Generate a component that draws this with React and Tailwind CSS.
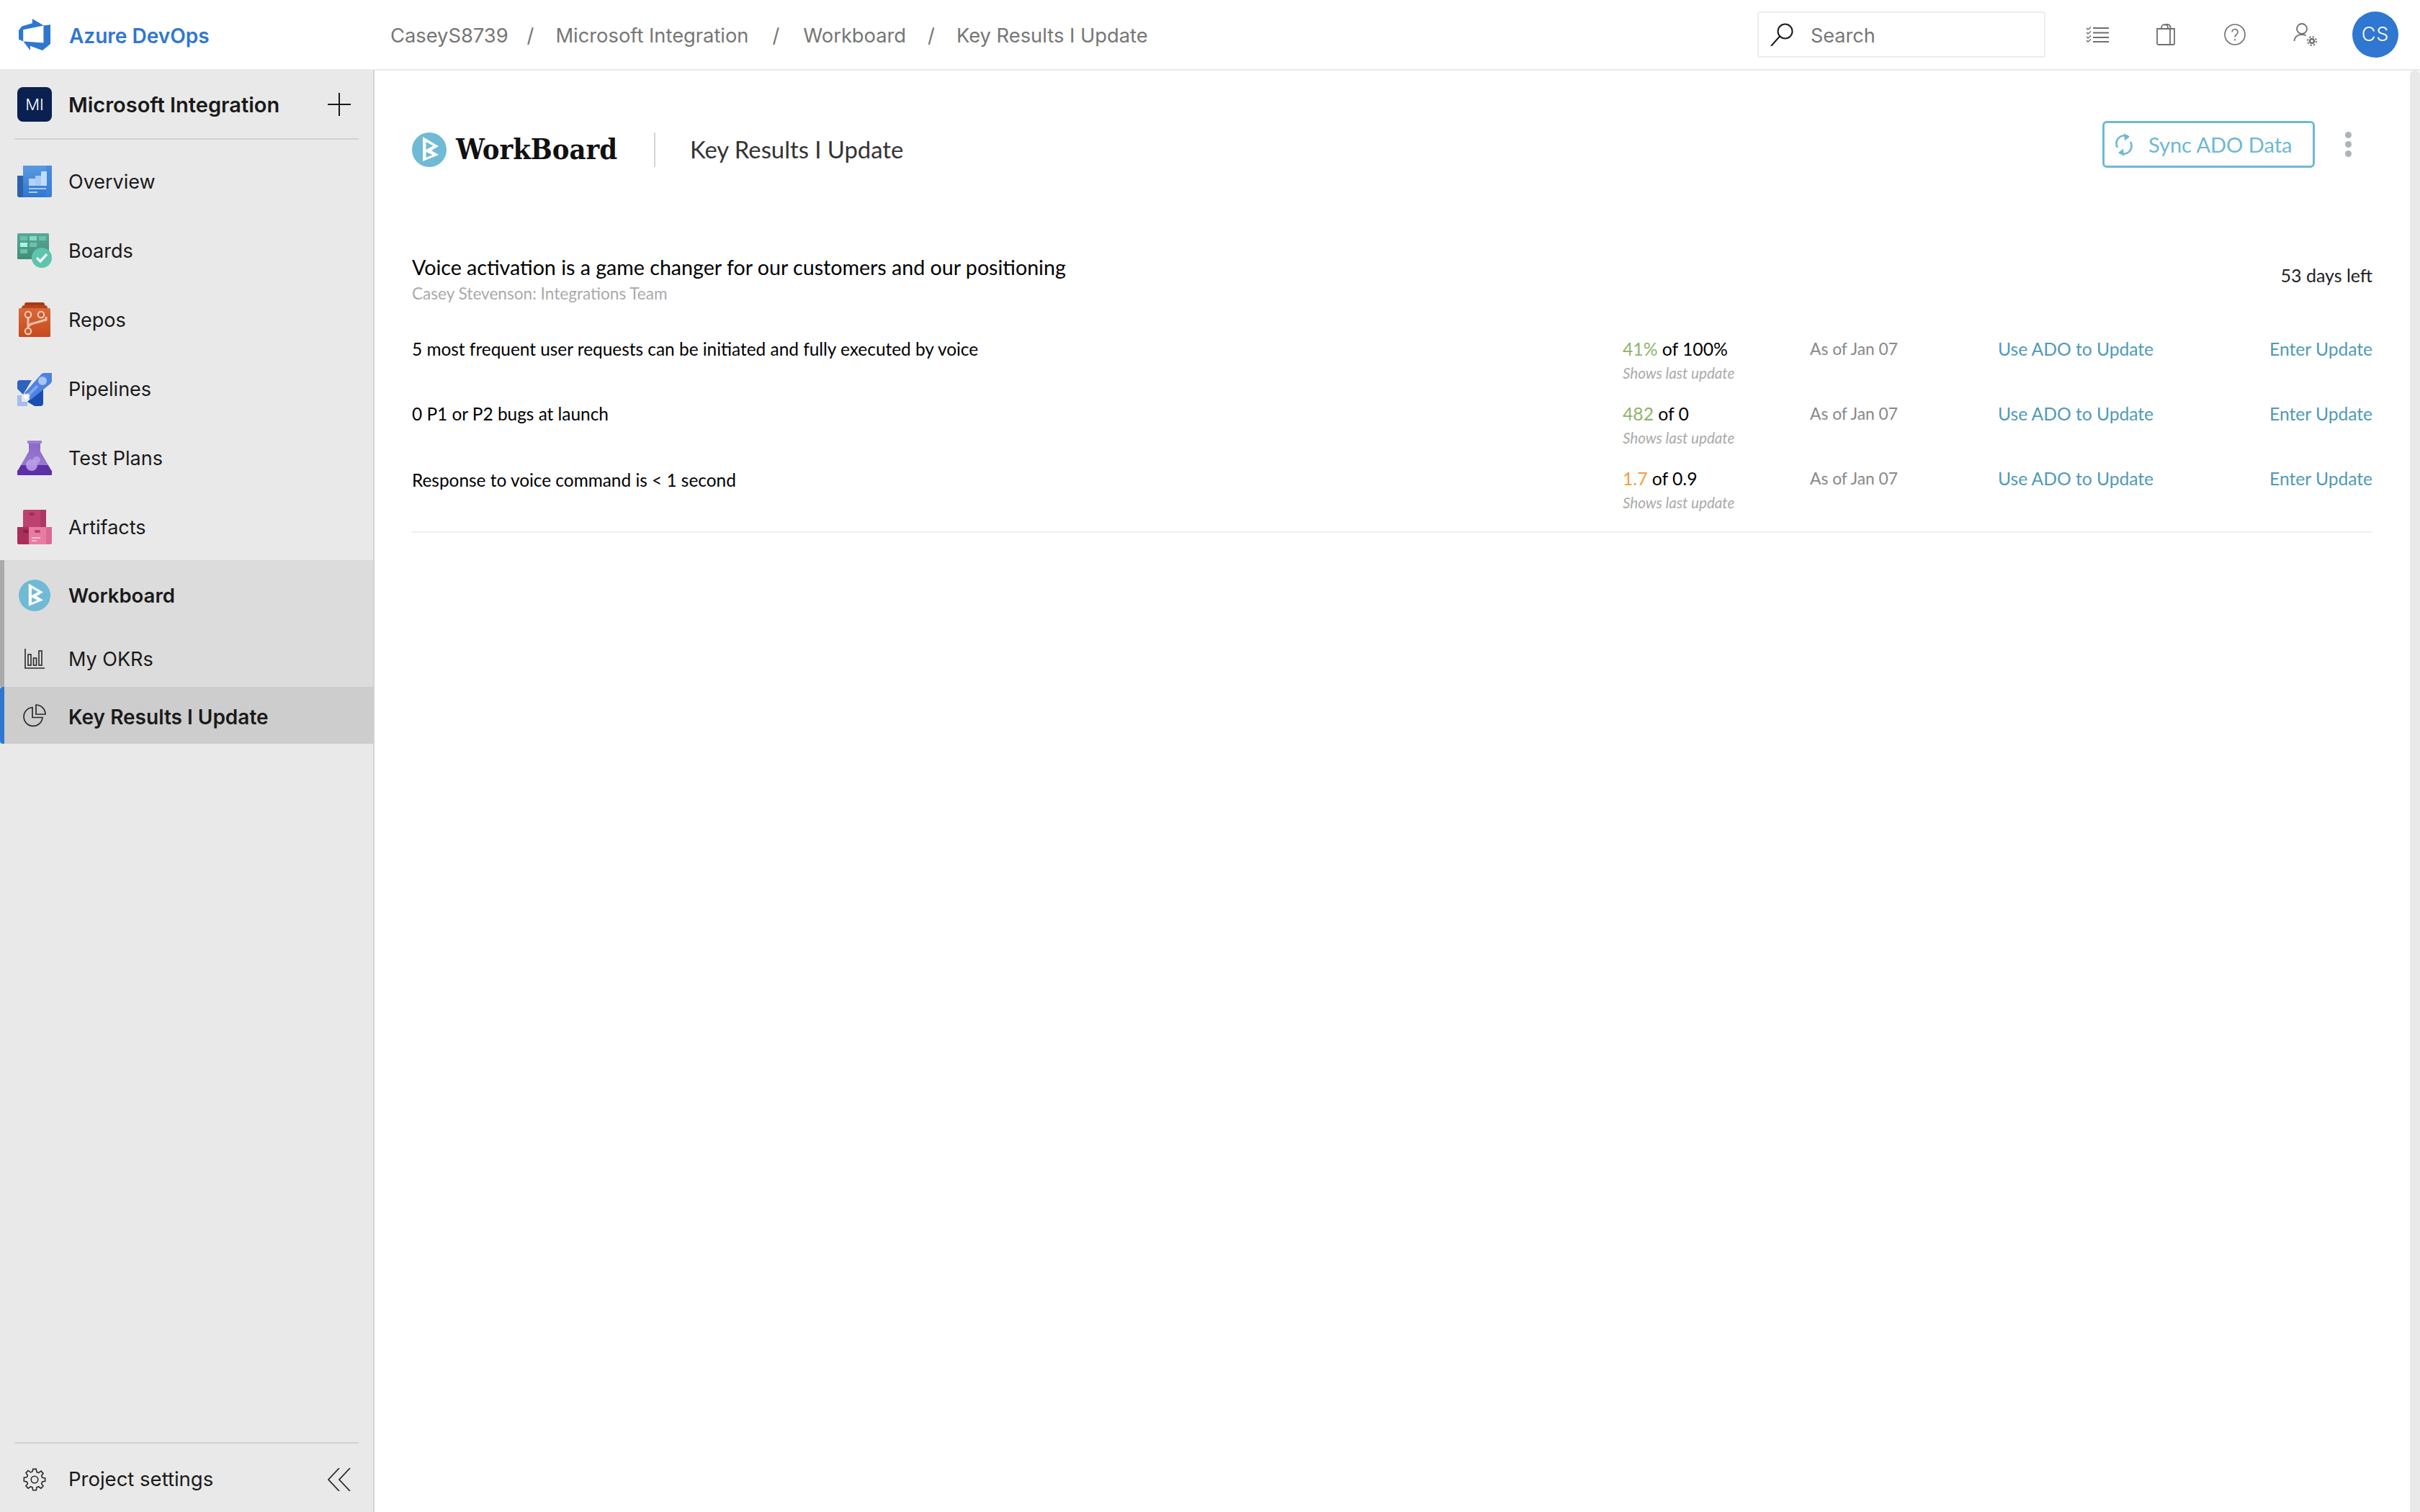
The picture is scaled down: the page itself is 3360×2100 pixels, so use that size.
import React from 'react';

const krs = [
    { title: '5 most frequent user requests can be initiated and fully executed by voice', value: '41%', of: 'of 100%', color: 'text-[#8fb36b]' },
    { title: '0 P1 or P2 bugs at launch', value: '482', of: 'of 0', color: 'text-[#8fb36b]' },
    { title: 'Response to voice command is < 1 second', value: '1.7', of: 'of 0.9', color: 'text-[#f79a3e]', nudge: 'pt-[3px]' },
];

const crumbs = [
    { label: 'CaseyS8739' },
    { label: 'Microsoft Integration', sep: 'ml-[26px] mr-[30px]' },
    { label: 'Workboard', sep: 'mx-[33px]' },
    { label: 'Key Results I Update', sep: 'mx-[30px]' },
];

function AzureLogo() {
    return (
        <svg viewBox="1 1 16 16" className="h-[44px] w-[44px]" fill="#2f77d0">
            <path d="M17 4v9.74l-4 3.28-6.2-2.26V17L3.29 12.41l10.23.8V4.44zm-3.41.49L7.85 1V3.29L2.58 4.84 1 6.87v4.61l2.26 1V6.57z" />
        </svg>
    );
}

function OverviewIcon() {
    return (
        <svg viewBox="0 0 48 48" className="h-[48px] w-[48px]">
            <defs>
                <linearGradient id="ov" x1="0" y1="0" x2="0" y2="1">
                    <stop offset="0" stopColor="#5a9ae0" />
                    <stop offset="1" stopColor="#2f76d2" />
                </linearGradient>
            </defs>
            <path d="M0 16h10v30H3a3 3 0 0 1-3-3z" fill="#2c62ab" />
            <path d="M8 2h40v41a3 3 0 0 1-3 3H8z" fill="url(#ov)" />
            <path d="M40 46V2h8v41a3 3 0 0 1-3 3z" fill="#3d83d8" opacity="0.6" />
            <rect x="16" y="20" width="9" height="10" fill="#b5d4f8" />
            <rect x="25" y="16" width="8" height="14" fill="#a6cbf6" />
            <rect x="33" y="10" width="8" height="20" fill="#c2dcfa" />
            <rect x="16" y="33" width="24" height="2" fill="#a6cbf6" />
            <rect x="16" y="38" width="12" height="2" fill="#a6cbf6" />
        </svg>
    );
}

function BoardsIcon() {
    return (
        <svg viewBox="0 0 48 48" className="h-[48px] w-[48px]">
            <defs>
                <linearGradient id="bo" x1="0" y1="0" x2="0" y2="1">
                    <stop offset="0" stopColor="#59a896" />
                    <stop offset="1" stopColor="#3f8f78" />
                </linearGradient>
            </defs>
            <rect x="0" y="0" width="44" height="36" rx="1.5" fill="url(#bo)" />
            <rect x="4" y="4" width="10" height="6" fill="#6cc0ac" />
            <rect x="17" y="4" width="10" height="6" fill="#86dac8" />
            <rect x="30" y="4" width="10" height="6" fill="#6cc0ac" />
            <rect x="4" y="13" width="10" height="6" fill="#a8f3e3" />
            <rect x="17" y="13" width="10" height="6" fill="#6cc0ac" />
            <rect x="4" y="22" width="10" height="6" fill="#6cc0ac" />
            <circle cx="34" cy="34" r="14" fill="#5dc4ad" />
            <path d="M27 34l5 5 9-10" fill="none" stroke="#e8fbf6" strokeWidth="3.4" />
        </svg>
    );
}

function ReposIcon() {
    return (
        <svg viewBox="0 0 44 48" className="h-[48px] w-[44px]">
            <defs>
                <linearGradient id="re" x1="0" y1="0" x2="0" y2="1">
                    <stop offset="0" stopColor="#d9683a" />
                    <stop offset="1" stopColor="#c64b1f" />
                </linearGradient>
            </defs>
            <path d="M8 3a3 3 0 0 1 3-3h22a3 3 0 0 1 3 3v4H8z" fill="#a93a14" />
            <path d="M4 8a4 4 0 0 1 4-4h28a4 4 0 0 1 4 4v4H4z" fill="#b84419" />
            <rect x="0" y="8" width="44" height="40" rx="1.5" fill="url(#re)" />
            <path d="M13 22v20M13 34l4-4 21-6v-4" fill="none" stroke="#f4c3a8" strokeWidth="3" />
            <circle cx="13" cy="17" r="4.2" fill="#d05a2c" stroke="#f7d2bc" strokeWidth="2" />
            <circle cx="31" cy="17" r="4.2" fill="#d05a2c" stroke="#f7d2bc" strokeWidth="2" />
            <circle cx="13" cy="40" r="4.2" fill="#d05a2c" stroke="#f7d2bc" strokeWidth="2" />
        </svg>
    );
}

function PipelinesIcon() {
    return (
        <svg viewBox="0 0 48 48" className="h-[48px] w-[48px]">
            <path d="M0 16a4 4 0 0 1 4-4h16L8 32 0 24z" fill="#2f62c0" />
            <path d="M20 36l16-12v20a4 4 0 0 1-4 4H24l-10-6z" fill="#1a4db4" />
            <path d="M10 30L33 4a6 6 0 0 1 4-2h11v11a6 6 0 0 1-2 4L19 39z" fill="#4f82e0" />
            <circle cx="35" cy="13" r="6" fill="#a9c5f4" />
            <path d="M16 32l12-12" stroke="#7ea6ec" strokeWidth="4" />
            <path d="M0 33h6v9h8v6H0z" fill="#a4bcf1" />
            <path d="M9 35l5-5 4 4-5 5z" fill="#fff" opacity="0.9" />
        </svg>
    );
}

function TestPlansIcon() {
    return (
        <svg viewBox="0 0 48 48" className="h-[48px] w-[48px]">
            <defs>
                <linearGradient id="tp" x1="0" y1="0" x2="0" y2="1">
                    <stop offset="0" stopColor="#8c6ac6" />
                    <stop offset="1" stopColor="#9679d2" />
                </linearGradient>
            </defs>
            <rect x="14" y="0" width="20" height="4" rx="1" fill="#9d7fd6" />
            <path d="M16 4h16v11l11 19H5l11-19z" fill="url(#tp)" />
            <path d="M5 34h38l4 7a3 3 0 0 1-3 7H4a3 3 0 0 1-3-7z" fill="#5e30a8" />
            <circle cx="20" cy="34" r="8" fill="#b9a0e6" opacity="0.9" />
            <circle cx="27" cy="27" r="5" fill="#b9a0e6" opacity="0.8" />
        </svg>
    );
}

function ArtifactsIcon() {
    return (
        <svg viewBox="0 0 48 48" className="h-[48px] w-[48px]">
            <path d="M8 2a2 2 0 0 1 2-2h28a2 2 0 0 1 2 2v24H8z" fill="#bd4270" />
            <rect x="32" y="0" width="8" height="24" fill="#ae3865" />
            <rect x="16" y="4" width="8" height="4" rx="2" fill="#9c2e58" />
            <path d="M0 24h16v24H2a2 2 0 0 1-2-2z" fill="#a92e5a" />
            <rect x="16" y="24" width="24" height="24" fill="#e77ca3" />
            <path d="M40 24h8v22a2 2 0 0 1-2 2h-6z" fill="#d96a94" />
            <rect x="8" y="28" width="8" height="4" rx="2" fill="#84214a" />
            <rect x="24" y="28" width="8" height="4" rx="2" fill="#b93f6f" />
            <rect x="20" y="38" width="12" height="2" fill="#f7bcd2" />
            <rect x="20" y="42" width="7" height="2" fill="#f7bcd2" />
        </svg>
    );
}

function WorkboardMark({ size }) {
    return (
        <svg viewBox="0 0 48 48" style={{ width: size, height: size }}>
            <circle cx="24" cy="24" r="24" fill="#6fbad4" />
            <path d="M15 6L37 19L27 25L37 31L15 40ZM19.500 13V24L29.500 18.500ZM19.500 27V35L28.500 31Z" fill="#fff" fillRule="evenodd" />
        </svg>
    );
}

function BarsIcon() {
    return (
        <svg viewBox="0 0 28 28" className="h-[28px] w-[28px]" fill="none" stroke="#2a2a2a" strokeWidth="1.6">
            <path d="M1 0v27h27" />
            <rect x="5" y="8" width="4" height="15" />
            <rect x="12.5" y="13" width="4" height="10" />
            <rect x="20" y="3" width="4" height="20" />
        </svg>
    );
}

function PieIcon() {
    return (
        <svg viewBox="0 0 32 32" className="h-[32px] w-[32px]" fill="none" stroke="#2a2a2a" strokeWidth="1.7">
            <path d="M13 4.5a13 13 0 1 0 14 14H13z" />
            <path d="M18 1a13 13 0 0 1 13 13H18z" />
        </svg>
    );
}

function GearIcon() {
    return (
        <svg viewBox="0 0 24 24" className="h-[32px] w-[32px]" fill="none" stroke="#2a2a2a" strokeWidth="1.2">
            <circle cx="12" cy="12" r="3.6" />
            <path d="M10.3 1h3.4l.5 3.1 1.9.8 2.6-1.8 2.3 2.4-1.8 2.5.8 1.9 3 .5v3.3l-3 .6-.8 1.9 1.8 2.5-2.3 2.4-2.6-1.8-1.9.8-.5 3h-3.4l-.5-3-1.9-.8-2.6 1.8-2.3-2.4 1.8-2.5-.8-1.9-3-.6V9.9l3-.5.8-1.9-1.8-2.5 2.3-2.4 2.6 1.8 1.9-.8z" />
        </svg>
    );
}

function NavRow({ icon, label }) {
    return (
        <div className="flex h-[96px] items-center gap-[23px] pl-[24px] text-[27px] text-[#1a1a1a]">
            <div className="flex w-[48px] justify-center">{icon}</div>
            <span className="pt-[2px]">{label}</span>
        </div>
    );
}

function Sidebar() {
    return (
        <aside className="flex w-[520px] shrink-0 flex-col border-r-[2px] border-[#d2d2d2] bg-[#e9e9e9] font-['Inter',sans-serif]">
            <div className="mx-[20px] flex h-[96px] items-center border-b-[2px] border-[#d2d2d2] pr-[11px]">
                <div className="ml-[4px] flex h-[48px] w-[48px] items-center justify-center rounded-[8px] bg-[#0a2050] text-[22px] font-light text-white">MI</div>
                <span className="ml-[23px] flex-1 pt-[2px] text-[29px] font-semibold text-[#1a1a1a]">Microsoft Integration</span>
                <svg viewBox="0 0 32 32" className="h-[32px] w-[32px]" stroke="#1a1a1a" strokeWidth="2">
                    <path d="M16 0v32M0 16h32" />
                </svg>
            </div>
            <div className="mt-[10px]">
                <NavRow icon={<OverviewIcon />} label="Overview" />
                <NavRow icon={<BoardsIcon />} label="Boards" />
                <NavRow icon={<ReposIcon />} label="Repos" />
                <NavRow icon={<PipelinesIcon />} label="Pipelines" />
                <NavRow icon={<TestPlansIcon />} label="Test Plans" />
                <NavRow icon={<ArtifactsIcon />} label="Artifacts" />
            </div>
            {/* Workboard group */}
            <div className="-mt-[2px] border-l-[6px] border-[#aaaaaa] bg-[#dcdcdc]">
                <div className="flex h-[98px] items-center gap-[23px] pl-[18px] text-[27.500px] font-semibold text-[#1a1a1a]">
                    <div className="flex w-[48px] justify-center"><WorkboardMark size={44} /></div>
                    <span className="pt-[2px]">Workboard</span>
                </div>
                <div className="flex h-[78px] items-center gap-[23px] pl-[18px] text-[27px] text-[#1a1a1a]">
                    <div className="flex w-[48px] justify-center"><BarsIcon /></div>
                    <span className="pt-[2px]">My OKRs</span>
                </div>
            </div>
            <div className="flex h-[79px] items-center gap-[23px] rounded-l-[4px] border-l-[6px] border-[#2f77d0] bg-[#cdcdcd] pl-[18px] text-[28px] font-semibold text-[#1a1a1a]">
                <div className="flex w-[48px] justify-center"><PieIcon /></div>
                <span className="pt-[4px]">Key Results I Update</span>
            </div>
            <div className="mx-[20px] mt-auto flex h-[97px] items-center border-t-[2px] border-[#d2d2d2] pr-[11px] pt-[4px]">
                <div className="ml-[4px] flex w-[48px] justify-center"><GearIcon /></div>
                <span className="ml-[23px] flex-1 text-[27.500px] text-[#1a1a1a]">Project settings</span>
                <svg viewBox="0 0 32 32" className="h-[32px] w-[32px]" fill="none" stroke="#2a2a2a" strokeWidth="1.8">
                    <path d="M16 0L1 16l15 16M31 0L16 16l15 16" />
                </svg>
            </div>
        </aside>
    );
}

function TopBar() {
    return (
        <header className="flex h-[98px] items-center border-b-[2px] border-[#e8e8e8] bg-white font-['Inter',sans-serif]">
            <div className="ml-[26px] flex w-[516px] items-center gap-[26px]">
                <AzureLogo />
                <span className="pt-[3px] text-[28px] font-semibold text-[#2f77d0]">Azure DevOps</span>
            </div>
            <nav className="flex flex-1 items-center pt-[4px] text-[27.300px] text-[#767676]">
                {crumbs.map((crumb) => (
                    <React.Fragment key={crumb.label}>
                        {crumb.sep && <span className={crumb.sep}>/</span>}
                        <span>{crumb.label}</span>
                    </React.Fragment>
                ))}
            </nav>
            <div className="flex h-[64px] w-[400px] items-center rounded-[4px] border-[2px] border-[#ececec] pl-[16px] text-[27px] text-[#767676]">
                <svg viewBox="0 0 32 32" className="h-[32px] w-[32px]" fill="none" stroke="#1a1a1a" strokeWidth="2">
                    <circle cx="20.5" cy="11.5" r="10" />
                    <path d="M13 18.5L1 32" />
                </svg>
                <span className="ml-[24px] pt-[4px]">Search</span>
            </div>
            <div className="ml-[56px] flex items-center">
                <svg viewBox="0 0 32 22" className="h-[22px] w-[32px]" fill="none" stroke="#6f6f6f">
                    <path d="M1 2l2 2 4-3.500M1 8l2 2 4-3.500M1 14l2 2 4-3.500M1 19l2 2 4-3.500" strokeWidth="1.500" />
                    <path d="M10 2h22M10 8.500h22M10 15h22M10 21h22" strokeWidth="2" />
                </svg>
                <svg viewBox="0 0 26 30" className="ml-[66px] h-[30px] w-[26px]" fill="none" stroke="#6f6f6f" strokeWidth="1.800">
                    <path d="M1 7h24v20a2 2 0 0 1-2 2H3a2 2 0 0 1-2-2z" />
                    <path d="M19 7v22M7 7V5.500a4.500 4.500 0 0 1 9 0V7M12 2a4.500 4.500 0 0 1 7.500 3.500V7" />
                </svg>
                <svg viewBox="0 0 30 30" className="ml-[68px] h-[30px] w-[30px]" fill="none" stroke="#6f6f6f" strokeWidth="1.6">
                    <circle cx="15" cy="15" r="14" />
                    <path d="M11 11.500a4 4 0 1 1 6.500 3.200c-1.500 1.100-2.500 1.800-2.500 3.800M15 21v2.500" />
                </svg>
                <svg viewBox="0 0 34 32" className="ml-[66px] h-[32px] w-[34px]" fill="none" stroke="#6f6f6f" strokeWidth="1.8">
                    <circle cx="12" cy="8" r="7" />
                    <path d="M1.500 25c0-5 4-9 10-9h2c1.500 0 3 .5 4 1.500" />
                    <circle cx="26" cy="25" r="3" strokeWidth="2.500" />
                    <circle cx="26" cy="25" r="6" strokeWidth="1.800" strokeDasharray="2.400 2.300" />
                </svg>
                <div className="ml-[48px] mr-[30px] flex h-[64px] w-[64px] items-center justify-center rounded-full bg-[#2f77d0] text-[27px] font-light tracking-[1px] text-white">CS</div>
            </div>
        </header>
    );
}

function KrRow({ kr }) {
    return (
        <div className="grid h-[90px] grid-cols-[1681px_260px_261px_1fr] font-['Lato',sans-serif]">
            <div className={`text-[24.400px] leading-[36px] text-black ${kr.nudge || 'pt-[1px]'}`}>{kr.title}</div>
            <div>
                <div className="pt-[1px] text-[24.700px] leading-[36px] text-black">
                    <span className={kr.color}>{kr.value}</span> {kr.of}
                </div>
                <div className="text-[20.600px] italic leading-[30px] text-[#aaaaaa]">Shows last update</div>
            </div>
            <div className="pt-[2px] text-[22.800px] leading-[32px] text-[#888888]">As of Jan 07</div>
            <div className="flex justify-between pt-[1px] text-[24.600px] leading-[36px] text-[#4f9ab5]">
                <span>Use ADO to Update</span>
                <span>Enter Update</span>
            </div>
        </div>
    );
}

function Main() {
    return (
        <main className="flex-1 px-[52px] pt-[70px] font-['Lato',sans-serif]">
            <div className="flex items-start justify-between">
                <div className="mt-[16px] flex h-[48px] items-center">
                    <WorkboardMark size={48} />
                    <span className="ml-[13px] w-[223px] whitespace-nowrap font-['DejaVu_Serif_Condensed','DejaVu_Serif',serif] text-[39.500px] font-bold text-[#111111]">WorkBoard</span>
                    <div className="ml-[52px] h-[48px] w-[2px] bg-[#d4d4d4]" />
                    <span className="ml-[48px] text-[32.800px] text-[#333333]">Key Results I Update</span>
                </div>
                <div className="flex items-center">
                    <div className="flex h-[65px] w-[295px] items-center rounded-[6px] border-[3px] border-[#6fb9d4] pl-[15px] text-[29px] text-[#6db8d3]">
                        <svg viewBox="0 0 24 32" className="h-[32px] w-[24px]" fill="none" stroke="#6db8d3" strokeWidth="2.600">
                            <path d="M19 5.500A11 11 0 0 0 3 20M5 26.500A11 11 0 0 0 21 12" />
                            <path d="M12 0l7 5.500-6 5zM12 32l-7-5.500 6-5z" fill="#6db8d3" stroke="none" />
                        </svg>
                        <span className="ml-[22px] pt-[1px]">Sync ADO Data</span>
                    </div>
                    <div className="ml-[42px] mr-[29px] flex flex-col gap-[4px]">
                        <div className="h-[9px] w-[9px] rounded-full bg-[#a9b5bf]" />
                        <div className="h-[9px] w-[9px] rounded-full bg-[#a9b5bf]" />
                        <div className="h-[9px] w-[9px] rounded-full bg-[#a9b5bf]" />
                    </div>
                </div>
            </div>

            <div className="mt-[120px] flex items-start justify-between">
                <div>
                    <h2 className="text-[28.600px] leading-[36px] text-black">Voice activation is a game changer for our customers and our positioning</h2>
                    <p className="pt-[1px] text-[22.600px] leading-[36px] text-[#aaaaaa]">Casey Stevenson: Integrations Team</p>
                </div>
                <div className="pt-[11px] text-[25px] leading-[36px] text-[#222222]">53 days left</div>
            </div>

            <div className="mt-[40px] border-b-[2px] border-[#eeeeee] pb-[2px]">
                {krs.map((kr) => (
                    <KrRow key={kr.title} kr={kr} />
                ))}
            </div>
        </main>
    );
}

export default function App() {
    return (
        <div className="flex h-[2100px] w-[3360px] flex-col overflow-hidden bg-white">
            <TopBar />
            <div className="flex flex-1">
                <Sidebar />
                <Main />
                <div className="w-[14px] shrink-0 rounded-t-[6px] bg-[#e9e9e9]" />
            </div>
        </div>
    );
}
